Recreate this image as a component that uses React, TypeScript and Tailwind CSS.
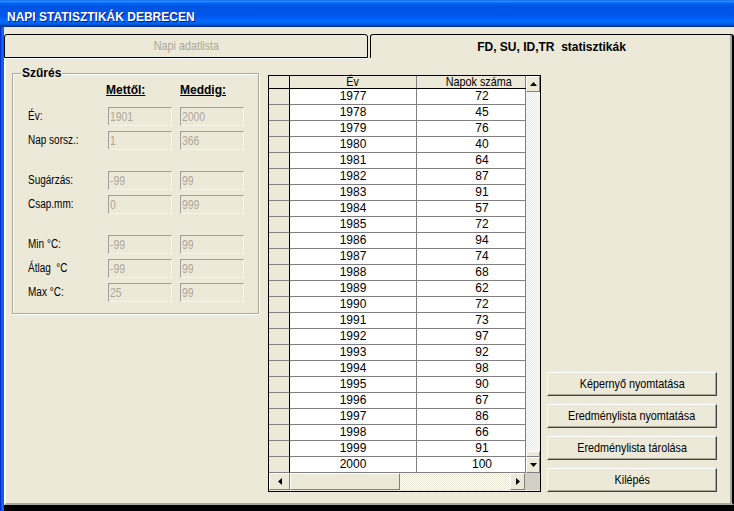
import React from "react";

const data: [number, number][] = [
  [1977, 72], [1978, 45], [1979, 76], [1980, 40], [1981, 64], [1982, 87],
  [1983, 91], [1984, 57], [1985, 72], [1986, 94], [1987, 74], [1988, 68],
  [1989, 62], [1990, 72], [1991, 73], [1992, 97], [1993, 92], [1994, 98],
  [1995, 90], [1996, 67], [1997, 86], [1998, 66], [1999, 91], [2000, 100],
];

const fields: { label: string; a: string; b: string; gap: boolean }[] = [
  { label: "Év:", a: "1901", b: "2000", gap: false },
  { label: "Nap sorsz.:", a: "1", b: "366", gap: false },
  { label: "Sugárzás:", a: "-99", b: "99", gap: true },
  { label: "Csap.mm:", a: "0", b: "999", gap: false },
  { label: "Min °C:", a: "-99", b: "99", gap: true },
  { label: "Átlag  °C", a: "-99", b: "99", gap: false },
  { label: "Max °C:", a: "25", b: "99", gap: false },
];

function NarrowC({ children }: { children: React.ReactNode }) {
  return <span className="inline-block whitespace-pre origin-center scale-x-[0.83]">{children}</span>;
}

function NarrowL({ children }: { children: React.ReactNode }) {
  return <span className="inline-block whitespace-pre origin-left scale-x-[0.8]">{children}</span>;
}

function Field({ value }: { value: string }) {
  return (
    <div className="w-[64px] h-[19px] border border-t-[#A0A0A0] border-l-[#A0A0A0] border-r-[#F4F4F0] border-b-[#F4F4F0] bg-[#ECE9D8] pl-[1px] flex items-center text-[13px] leading-[15px] text-[#ACA899]">
      <NarrowL>{value}</NarrowL>
    </div>
  );
}

function Arrow({ dir }: { dir: "up" | "down" | "left" | "right" }) {
  const pts =
    dir === "up"
      ? "0,4 7,4 3.5,0"
      : dir === "down"
      ? "0,0 7,0 3.5,4"
      : dir === "left"
      ? "4,0 4,7 0,3.5"
      : "0,0 0,7 4,3.5";
  const w = dir === "up" || dir === "down" ? 7 : 4;
  const h = dir === "up" || dir === "down" ? 4 : 7;
  return (
    <svg width={w} height={h} viewBox={`0 0 ${w} ${h}`}>
      <polygon points={pts} fill="#000" />
    </svg>
  );
}

const raised =
  "border border-t-white border-l-white border-r-[#808080] border-b-[#808080] bg-[#ECE9D8]";
const trough =
  "bg-[repeating-conic-gradient(#ECE9D8_0_25%,#ffffff_0_50%)] bg-[length:2px_2px]";

function Grid() {
  return (
    <div className="w-[273px] h-[417px] border border-black flex flex-col bg-[#ECE9D8] text-[12px]">
      <div className="flex">
        <div className="w-[257px] flex flex-col">
          <div className="flex h-[13px] border-b border-black leading-[12px] text-[13px]">
            <div className="w-[21px] border-r border-black" />
            <div className="w-[127px] border-r border-[#808080] flex justify-center"><NarrowC>Év</NarrowC></div>
            <div className="w-[109px] border-r border-[#808080] flex justify-center pl-[16px]"><NarrowC>Napok száma</NarrowC></div>
          </div>
          {data.map(([y, n]) => (
            <div key={y} className="flex h-[16px] leading-[15px]">
              <div className="w-[21px] border-r border-black border-b border-b-[#808080] bg-[#ECE9D8]" />
              <div className="w-[127px] border-r border-b border-[#808080] bg-white text-center">{y}</div>
              <div className="w-[109px] border-r border-b border-[#808080] bg-white text-center pl-[22px]">{n}</div>
            </div>
          ))}
        </div>
        <div className="w-[14px] flex flex-col">
          <div className={`h-[16px] ${raised} flex items-center justify-center`}>
            <Arrow dir="up" />
          </div>
          <div className={`flex-1 ${trough}`} />
          <div className={`h-[6px] ${raised}`} />
          <div className={`h-[16px] ${raised} flex items-center justify-center`}>
            <Arrow dir="down" />
          </div>
        </div>
      </div>
      <div className="flex h-[17px]">
        <div className="w-[256px] flex">
          <div className={`w-[21px] ${raised} flex items-center justify-center`}>
            <Arrow dir="left" />
          </div>
          <div className={`w-[110px] ${raised}`} />
          <div className={`flex-1 ${trough}`} />
          <div className={`w-[15px] ${raised} flex items-center justify-center`}>
            <Arrow dir="right" />
          </div>
        </div>
        <div className="flex-1 bg-[#D4D0C8]" />
      </div>
    </div>
  );
}

function Button({ children }: { children: React.ReactNode }) {
  return (
    <div className="w-[170px] h-[24px] border border-t-white border-l-white border-r-[#404040] border-b-[#404040] shadow-[inset_-1px_-1px_0_#ACA899] bg-[#ECE9D8] flex items-center justify-center text-[13px]">
      <NarrowC>{children}</NarrowC>
    </div>
  );
}

export default function App() {
  return (
    <div className="w-[734px] h-[511px] overflow-hidden bg-[#ECE9D8] flex flex-col text-black font-['Liberation_Sans',Arial,sans-serif]">
      {/* Title bar */}
      <div className="h-[27px] pt-[6px] pl-[7px] flex items-center bg-[linear-gradient(to_bottom,#0058EE_0%,#3593FF_4%,#288EFF_6%,#127DFF_8%,#036FFC_10%,#0262EE_14%,#0057E5_20%,#0054E3_24%,#0055EB_56%,#005BF5_66%,#026AFE_76%,#0062EF_86%,#0052D6_92%,#0040AB_94%,#003092_100%)]">
        <span className="text-white font-bold text-[12px] leading-[14px] [text-shadow:1px_1px_0_#0A1883]">
          NAPI STATISZTIKÁK DEBRECEN
        </span>
      </div>

      <div className="flex flex-1 min-h-0">
        <div className="w-[4px] bg-[linear-gradient(to_right,#0019CF,#0855DD,#166AEE,#0855DD)]" />
        <div className="flex-1 flex flex-col bg-black pb-[6px]">
          <div className="flex-1 flex flex-col bg-[#ECE9D8]">
            {/* Tabs */}
            <div className="h-[31px] flex items-end">
              <div className="w-[364px] h-[24px] border border-black rounded-t-[3px] flex items-center justify-center text-[13px] text-[#ACA899]">
                <NarrowC>Napi adatlista</NarrowC>
              </div>
              <div className="w-[2px]" />
              <div className="flex-1 h-[24px] border-t border-l border-black border-r-2 border-r-black shadow-[inset_-2px_0_0_#ACA899] rounded-t-[3px] flex items-center justify-center font-bold text-[12px] whitespace-pre">
                FD, SU, ID,TR  statisztikák
              </div>
            </div>

            {/* Panel */}
            <div className="flex-1 flex flex-col border-l-2 border-l-white border-r-2 border-r-black border-b-2 border-b-[#ACA899] shadow-[inset_-2px_0_0_#ACA899]">
              <div className="h-px w-[362px] bg-white" />
              <div className="flex items-start pl-[6px] pt-[14px]">
                {/* Group box */}
                <div className="relative w-[247px] h-[241px] border border-[#ACA899] shadow-[1px_1px_0_#fff,inset_1px_1px_0_#fff] flex flex-col">
                  <div className="absolute left-[8px] top-[-8px] px-[1px] bg-[#ECE9D8] font-bold text-[12px] leading-[14px]">
                    Szűrés
                  </div>
                  <div className="mt-[9px] pl-[15px] grid grid-cols-[72px_64px_64px] gap-x-[8px] h-[14px] leading-[14px] font-bold text-[12px]">
                    <div />
                    <div className="underline -ml-[2px]">Mettől:</div>
                    <div className="underline">Meddig:</div>
                  </div>
                  <div className="mt-[10px] flex flex-col">
                    {fields.map((f, i) => (
                      <div
                        key={f.label}
                        className={`pl-[15px] grid grid-cols-[72px_64px_64px] gap-x-[8px] items-center ${
                          i === 0 ? "" : f.gap ? "mt-[21px]" : "mt-[5px]"
                        }`}
                      >
                        <div className="text-[12.5px] leading-[14px] -mt-[2px]">
                          <NarrowL>{f.label}</NarrowL>
                        </div>
                        <Field value={f.a} />
                        <Field value={f.b} />
                      </div>
                    ))}
                  </div>
                </div>

                {/* Data grid */}
                <div className="ml-[9px] mt-[2px]">
                  <Grid />
                </div>

                {/* Buttons */}
                <div className="ml-[6px] self-end flex flex-col gap-[8px]">
                  <Button>Képernyő nyomtatása</Button>
                  <Button>Eredménylista nyomtatása</Button>
                  <Button>Eredménylista tárolása</Button>
                  <Button>Kilépés</Button>
                </div>
              </div>
            </div>
          </div>
        </div>
      </div>
    </div>
  );
}
